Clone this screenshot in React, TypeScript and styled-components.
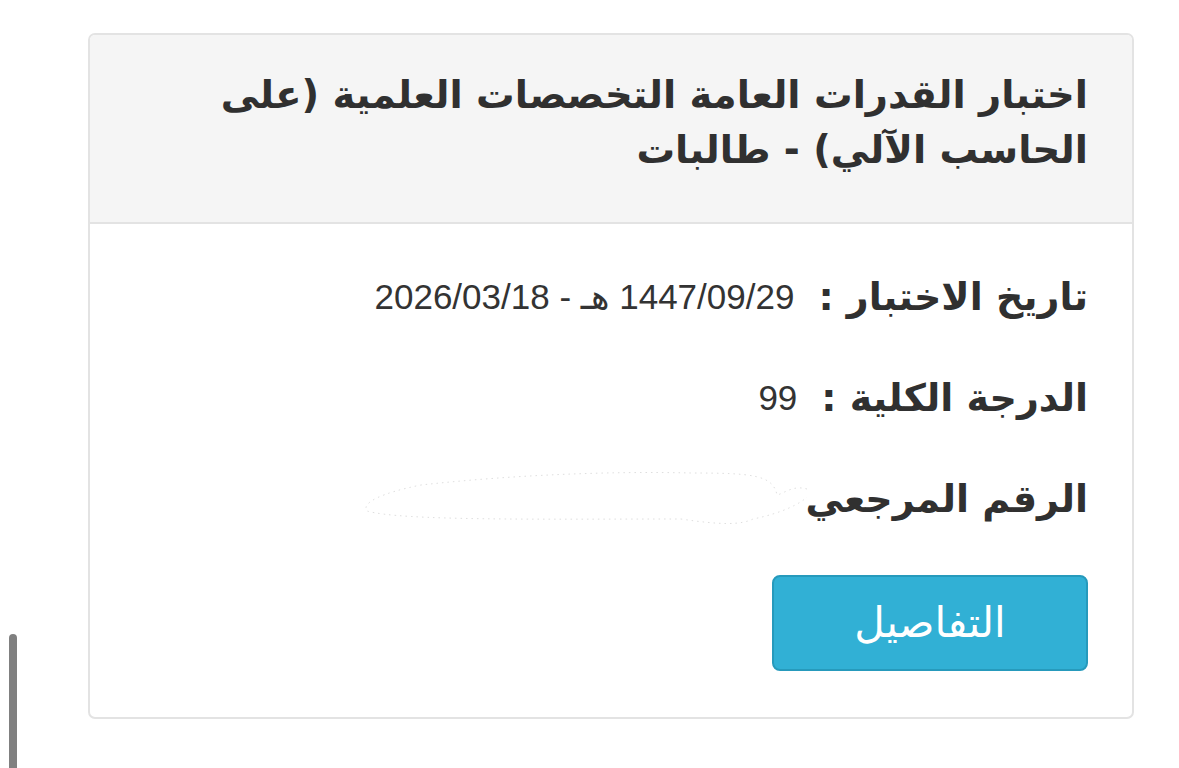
import React from "react";
import styled, { createGlobalStyle } from "styled-components";

const GlobalStyle = createGlobalStyle`
  html, body {
    margin: 0;
    padding: 0;
    background: #fff;
  }
  body {
    font-family: "Liberation Sans", "DejaVu Sans", sans-serif;
    color: #333;
  }
`;

const Page = styled.div`
  direction: rtl;
  padding: 33px 45px 0 88px;
  height: 768px;
  box-sizing: border-box;
`;

const Card = styled.div`
  border: 2px solid #e3e3e3;
  border-radius: 7px;
  background: #fff;
  overflow: hidden;
`;

const CardHead = styled.div`
  background: #f5f5f5;
  border-bottom: 2px solid #e3e3e3;
  padding: 32px 44px 45px 60px;
`;

const Title = styled.h3`
  margin: 0;
  font-family: "DejaVu Sans", sans-serif;
  font-weight: bold;
  font-size: 38.5px;
  line-height: 55px;
  color: #303030;
`;

const CardBody = styled.div`
  padding: 43px 44px 46px 60px;
  display: flex;
  flex-direction: column;
  gap: 41px;
`;

const Row = styled.div`
  display: flex;
  align-items: center;
  height: 60px;
`;

const Label = styled.span`
  font-family: "DejaVu Sans", sans-serif;
  font-weight: bold;
  font-size: 38px;
  color: #303030;
  white-space: nowrap;
`;

const Value = styled.span`
  font-family: "Liberation Sans", "DejaVu Sans", sans-serif;
  font-size: 35px;
  color: #333;
  margin-right: 24px;
  white-space: nowrap;
`;

const Smudge = styled.svg`
  display: block;
  width: 450px;
  height: 64px;
  margin-right: -6px;
`;

const ButtonRow = styled.div`
  margin-top: 5px;
  display: flex;
`;

const DetailsButton = styled.button`
  width: 316px;
  height: 96px;
  background: #31b0d5;
  border: 2px solid #269abc;
  border-radius: 8px;
  color: #fff;
  font-family: "DejaVu Sans", sans-serif;
  font-size: 42px;
  font-weight: normal;
  padding: 0 0 2px;
  cursor: pointer;
`;

const Scrollbar = styled.div`
  position: fixed;
  left: 9px;
  top: 634px;
  width: 8px;
  height: 140px;
  background: #808080;
  border-radius: 4px 4px 0 0;
`;

export default function App() {
  return (
    <>
      <GlobalStyle />
      <Page>
        <Card>
          <CardHead>
            <Title>اختبار القدرات العامة التخصصات العلمية (على الحاسب الآلي) - طالبات</Title>
          </CardHead>
          <CardBody>
            <Row>
              <Label>تاريخ الاختبار :</Label>
              <Value>1447/09/29 هـ - 2026/03/18</Value>
            </Row>
            <Row>
              <Label>الدرجة الكلية :</Label>
              <Value>99</Value>
            </Row>
            <Row>
              <Label>الرقم المرجعي</Label>
              <Smudge viewBox="0 0 450 64">
                <path
                  d="M446 22 C432 18 424 26 416 28 C412 8 392 6 330 6 C250 4 150 8 60 18 C20 26 0 36 6 44 C40 54 180 52 320 52 C360 58 380 58 392 52 C422 46 440 36 446 30"
                  fill="none"
                  stroke="#d6d6d6"
                  strokeWidth="0.8"
                  strokeDasharray="1.5 4"
                />
              </Smudge>
            </Row>
            <ButtonRow>
              <DetailsButton>التفاصيل</DetailsButton>
            </ButtonRow>
          </CardBody>
        </Card>
      </Page>
      <Scrollbar />
    </>
  );
}
